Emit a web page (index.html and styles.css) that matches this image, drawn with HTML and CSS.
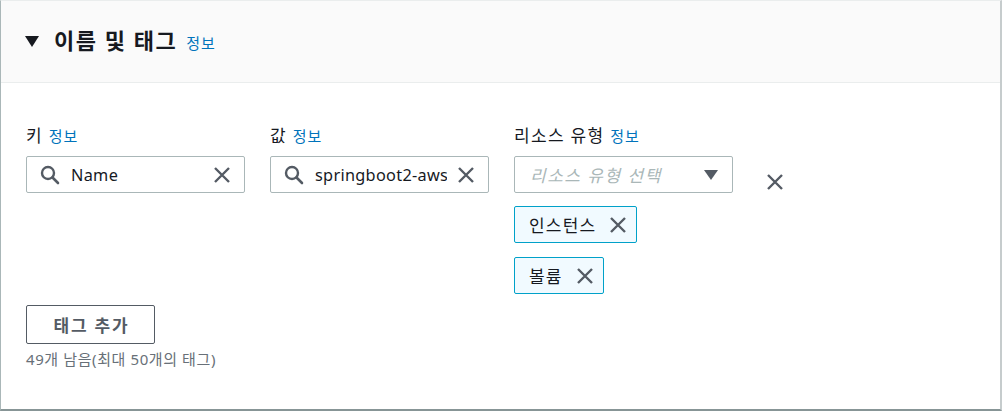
FILE: index.html
```html
<!DOCTYPE html>
<html lang="ko">
<head>
<meta charset="utf-8">
<link rel="stylesheet" href="styles.css">
</head>
<body>
<div class="card">
  <div class="card-header">
    <svg class="caret" width="14" height="11" viewBox="0 0 14 11"><path d="M0 0H14L7 11Z" fill="#16191f"/></svg>
    <h2 class="title">이름 및 태그</h2>
    <a class="info title-info">정보</a>
  </div>
  <div class="card-body">
    <div class="tag-row">
      <div class="field">
        <div class="label">키 <a class="info">정보</a></div>
        <div class="input">
          <svg class="search" width="20" height="20" viewBox="0 0 20 20"><circle cx="8" cy="8" r="6" fill="none" stroke="#545b64" stroke-width="2.4"/><path d="M12.5 12.5L18 18" stroke="#545b64" stroke-width="2.6" stroke-linecap="round"/></svg>
          <span class="value">Name</span>
          <svg class="clear" width="18" height="18" viewBox="0 0 18 18"><path d="M2 2L16 16M16 2L2 16" stroke="#545b64" stroke-width="2.4"/></svg>
        </div>
      </div>
      <div class="field">
        <div class="label">값 <a class="info">정보</a></div>
        <div class="input">
          <svg class="search" width="20" height="20" viewBox="0 0 20 20"><circle cx="8" cy="8" r="6" fill="none" stroke="#545b64" stroke-width="2.4"/><path d="M12.5 12.5L18 18" stroke="#545b64" stroke-width="2.6" stroke-linecap="round"/></svg>
          <span class="value">springboot2-aws</span>
          <svg class="clear" width="18" height="18" viewBox="0 0 18 18"><path d="M2 2L16 16M16 2L2 16" stroke="#545b64" stroke-width="2.4"/></svg>
        </div>
      </div>
      <div class="field">
        <div class="label">리소스 유형 <a class="info">정보</a></div>
        <div class="input select">
          <span class="placeholder">리소스 유형 선택</span>
          <svg class="dropdown" width="14" height="10" viewBox="0 0 14 10"><path d="M0 0H14L7 10Z" fill="#545b64"/></svg>
        </div>
        <div class="tokens">
          <div class="token">
            <span>인스턴스</span>
            <svg width="18" height="18" viewBox="0 0 18 18"><path d="M2 2L16 16M16 2L2 16" stroke="#545b64" stroke-width="2.4"/></svg>
          </div>
          <div class="token">
            <span>볼륨</span>
            <svg width="18" height="18" viewBox="0 0 18 18"><path d="M2 2L16 16M16 2L2 16" stroke="#545b64" stroke-width="2.4"/></svg>
          </div>
        </div>
      </div>
      <div class="remove">
        <svg width="18" height="18" viewBox="0 0 18 18"><path d="M2 2L16 16M16 2L2 16" stroke="#545b64" stroke-width="2.4"/></svg>
      </div>
    </div>
    <button class="add-btn">태그 추가</button>
    <div class="hint">49개 남음(최대 50개의 태그)</div>
  </div>
</div>
</body>
</html>
```
FILE: styles.css
```css
* { box-sizing: border-box; }
html, body { margin: 0; padding: 0; background: #fff; }
body {
  font-family: "Noto Sans", "Noto Sans CJK KR", sans-serif;
  color: #16191f;
  width: 1002px;
  height: 411px;
  overflow: hidden;
}
.card {
  width: 1002px;
  height: 411px;
  border-top: 1px solid #eaeded;
  border-left: 1px solid #aab7b8;
  border-right: 2px solid #c6cccd;
  border-bottom: 2px solid #879596;
  display: flex;
  flex-direction: column;
}
.card-header {
  height: 82px;
  background: #fafafa;
  border-bottom: 1px solid #eaeded;
  display: flex;
  align-items: center;
  padding: 0 0 3px 24px;
}
.caret { margin-right: 15px; margin-top: 2px; }
.title {
  margin: 0;
  font-size: 22px;
  font-weight: 700;
  line-height: 28px;
  letter-spacing: 1.5px;
}
.info {
  color: #0073bb;
  font-size: 15px;
  text-decoration: none;
  letter-spacing: 1px;
}
.title-info { margin-left: 9px; margin-top: 4px; }
.card-body {
  flex: 1;
  background: #fff;
  padding: 42px 25px 0 25px;
}
.tag-row {
  display: flex;
  align-items: flex-start;
}
.field { width: 219px; margin-right: 25px; }
.label {
  font-size: 17px;
  line-height: 22px;
  height: 22px;
  margin-bottom: 9px;
  letter-spacing: 1.3px;
  white-space: nowrap;
}
.input {
  height: 37px;
  border: 1px solid #aab7b8;
  border-radius: 2px;
  display: flex;
  align-items: center;
  padding: 0 13px 0 13px;
  overflow: hidden;
}
.search { flex: none; margin-right: 11px; margin-left: 0; }
.value {
  flex: 1;
  font-size: 16.3px;
  letter-spacing: 0.3px;
  line-height: 22px;
  white-space: nowrap;
  overflow: hidden;
  color: #16191f;
}
.clear { flex: none; margin-left: 10px; }
.select { padding-left: 15px; padding-right: 14px; }
.placeholder {
  flex: 1;
  font-style: italic;
  color: #aab7b8;
  font-size: 17px;
  letter-spacing: 1.5px;
  white-space: nowrap;
}
.dropdown { flex: none; }
.tokens {
  display: flex;
  flex-direction: column;
  align-items: flex-start;
  gap: 14px;
  margin-top: 13px;
}
.token {
  height: 37px;
  border: 1px solid #00a1c9;
  border-radius: 2px;
  background: #f1faff;
  display: flex;
  align-items: center;
  padding: 0 9px 0 14px;
  font-size: 17px;
  color: #16191f;
}
.token span { margin-right: 13px; letter-spacing: 1.2px; }
.remove {
  margin-left: 8px;
  margin-top: 48px;
  height: 18px;
}
.remove svg { display: block; }
.add-btn {
  display: block;
  margin-top: 11px;
  width: 129px;
  height: 39px;
  background: #fff;
  border: 1px solid #545b64;
  border-radius: 2px;
  font-family: "Noto Sans", "Noto Sans CJK KR", sans-serif;
  font-size: 17px;
  font-weight: 700;
  letter-spacing: 1.8px;
  text-indent: 2px;
  color: #545b64;
  padding: 0;
}
.hint {
  margin-top: 5px;
  font-size: 15px;
  line-height: 20px;
  letter-spacing: 0.6px;
  color: #687078;
}
```
